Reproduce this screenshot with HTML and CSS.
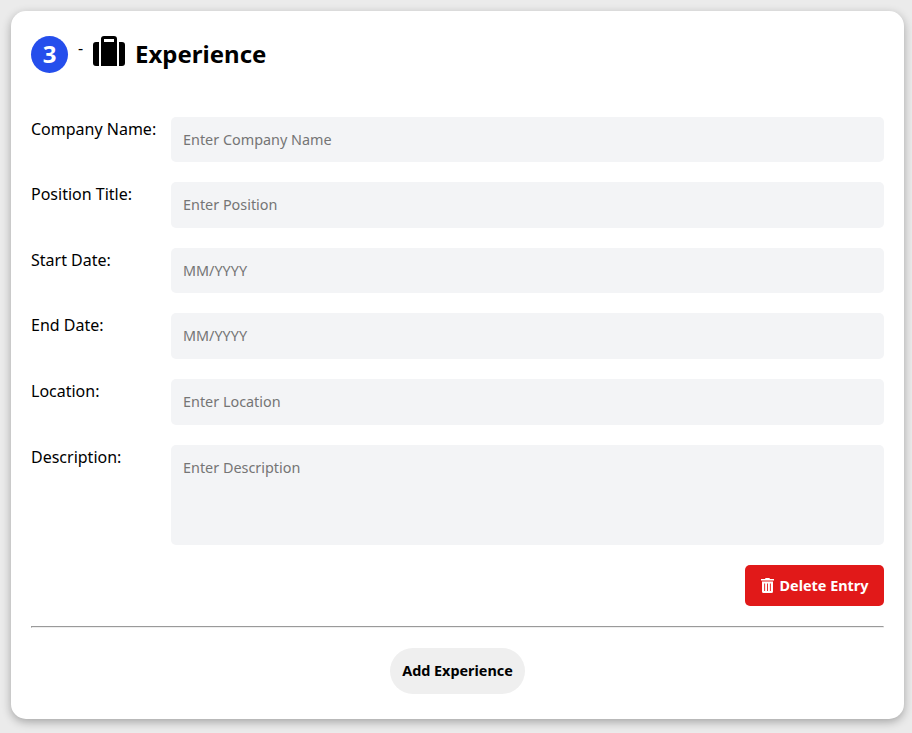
FILE: index.html
```html
<!DOCTYPE html>
<html lang="en">
<head>
<meta charset="utf-8">
<title>Experience</title>
<link rel="stylesheet" href="styles.css">
</head>
<body>
<section class="card">
  <header class="card-header">
    <span class="step">3</span>
    <span class="dash">-</span>
    <svg class="suitcase" viewBox="0 0 32 30" width="32" height="30"><path fill-rule="evenodd" d="M3 6h3v24H3a3 3 0 0 1-3-3V9a3 3 0 0 1 3-3zM26 6h3a3 3 0 0 1 3 3v18a3 3 0 0 1-3 3h-3zM8 6V3a3 3 0 0 1 3-3h10a3 3 0 0 1 3 3v27H8zM11 3v3h10V3z"/></svg>
    <h2 class="title">Experience</h2>
  </header>
  <form class="form">
    <label class="label" for="company">Company Name:</label>
    <input class="field" id="company" placeholder="Enter Company Name">
    <label class="label" for="position">Position Title:</label>
    <input class="field" id="position" placeholder="Enter Position">
    <label class="label" for="start">Start Date:</label>
    <input class="field" id="start" placeholder="MM/YYYY">
    <label class="label" for="end">End Date:</label>
    <input class="field" id="end" placeholder="MM/YYYY">
    <label class="label" for="location">Location:</label>
    <input class="field" id="location" placeholder="Enter Location">
    <label class="label" for="description">Description:</label>
    <textarea class="field area" id="description" placeholder="Enter Description"></textarea>
  </form>
  <button class="delete" type="button">
    <svg class="trash" viewBox="0 0 13 15" width="13" height="15"><path fill-rule="evenodd" d="M.5 1H4l.6-1h3.800L9 1h3.500a.5.5 0 0 1 0 1.600H.5A.5.5 0 0 1 .5 1zM1 3.600h11v9.900a1.500 1.500 0 0 1-1.500 1.500h-8A1.500 1.500 0 0 1 1 13.500zM3.200 5.500v7.500h.9V5.500zM6 5.500v7.500h.9V5.500zM8.900 5.500v7.500h.9V5.500z"/></svg>
    <span class="delete-text">Delete Entry</span>
  </button>
  <hr class="rule">
  <button class="add" type="button">Add Experience</button>
</section>
</body>
</html>
```
FILE: styles.css
```css
* { box-sizing: border-box; }
body {
  margin: 0;
  padding: 11px 8px 14px 11px;
  background: #ebebeb;
  color: #000;
  font: 16px/22px "Noto Sans", sans-serif;
}
.card {
  display: flex;
  flex-direction: column;
  height: 708px;
  padding: 20px;
  border-radius: 15px;
  background: #fff;
  box-shadow: 0 3px 10px rgba(0, 0, 0, 0.3);
}
.card-header { display: flex; height: 45.5px; margin-bottom: 40px; }
.step {
  width: 37px;
  height: 37px;
  margin-top: 5px;
  border-radius: 50%;
  background: #254eec;
  color: #fff;
  font-size: 24px;
  font-weight: 700;
  line-height: 35px;
  text-align: center;
}
.dash { margin: 6px 9.850px 0 10px; }
.suitcase { margin-top: 5px; }
.title { margin: 6px 0 0 10px; font-size: 24px; line-height: 33px; }
.form {
  display: grid;
  grid-template-columns: 140px 1fr;
  grid-template-rows: repeat(5, 45.625px) 100px;
  row-gap: 20px;
}
.label { padding-top: 1px; }
.field {
  width: 100%;
  height: 100%;
  padding: 12.550px 12px 13.075px;
  border: 0;
  border-radius: 5px;
  background: #f3f4f6;
  font: 14.4px/20px "Noto Sans", sans-serif;
}
.field::placeholder { color: #757575; }
.area { padding-top: 13px; resize: none; }
.delete {
  display: flex;
  align-items: center;
  justify-content: center;
  align-self: flex-end;
  width: 139px;
  height: 41px;
  margin-top: 20px;
  padding: 0;
  gap: 6px;
  border: 0;
  border-radius: 5px;
  background: #e11919;
  color: #fff;
  font: 700 14.4px/20px "Noto Sans", sans-serif;
}
.delete-text { padding-top: 1px; }
.trash { fill: currentColor; }
.rule {
  width: 100%;
  height: 2px;
  margin: 20px 0;
  border: 1px solid;
  border-color: #9a9a9a #eee #eee #9a9a9a;
}
.add {
  align-self: center;
  width: 135px;
  height: 46px;
  padding: 0;
  border: 0;
  border-radius: 23px;
  background: #efefef;
  color: #000;
  font: 700 14.4px/20px "Noto Sans", sans-serif;
}
```
